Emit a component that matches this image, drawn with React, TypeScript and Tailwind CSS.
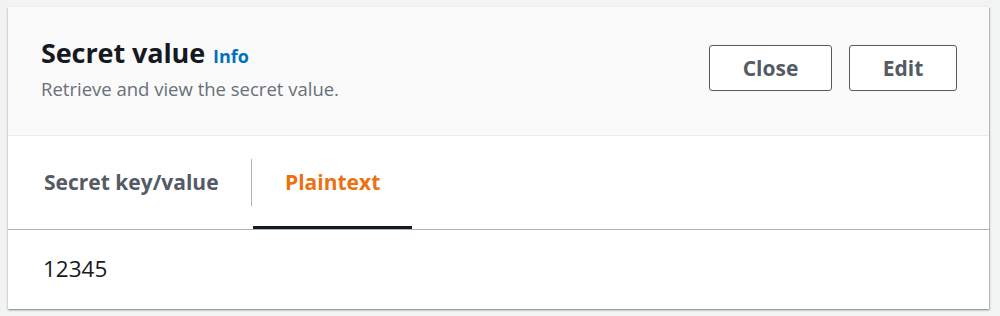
import React from "react";

export default function App() {
  return (
    <div className="w-[1000px] h-[316px] bg-[#f2f3f3] pt-[7px] pl-[8px] pr-[11px]" style={{ fontFamily: '"Open Sans", "Noto Sans", sans-serif' }}>
      <div className="bg-white shadow-[0_1px_2px_rgba(0,28,36,0.4),1px_1px_1px_rgba(0,28,36,0.15)] h-[302px] flex flex-col">
        <div className="h-[129px] shrink-0 bg-[#fafafa] border-b border-[#eaeded] flex items-start justify-between pl-[33px] pr-[32px]">
          <div className="pt-[30px]">
            <div className="flex items-baseline gap-[8px] h-[32px]">
              <span className="text-[27px] font-bold text-[#16191f] leading-[32px] tracking-[-0.1px]">Secret value</span>
              <span className="text-[18px] font-bold text-[#0073bb] leading-[32px]">Info</span>
            </div>
            <div className="text-[18.5px] text-[#687078] mt-[8px] leading-[24px]">Retrieve and view the secret value.</div>
          </div>
          <div className="flex gap-[17px] pt-[38px]">
            <button className="w-[123px] h-[46px] border border-[#545b64] rounded-[3px] bg-white text-[21px] font-bold text-[#545b64] leading-none">Close</button>
            <button className="w-[108px] h-[46px] border border-[#545b64] rounded-[3px] bg-white text-[21px] font-bold text-[#545b64] leading-none">Edit</button>
          </div>
        </div>
        <div className="h-[94px] shrink-0 border-b border-[#aab7b8] flex items-stretch pl-[36px]">
          <div className="w-[207px] flex items-center text-[21px] font-bold text-[#545b64]">Secret key/value</div>
          <div className="flex items-center"><div className="w-px h-[47px] bg-[#aab7b8]" /></div>
          <div className="relative w-[159px] ml-[1px] flex items-center pl-[32px] text-[21px] font-bold text-[#ec7211]">
            Plaintext
            <div className="absolute left-0 right-0 bottom-0 h-[3px] bg-[#16191f]" />
          </div>
        </div>
        <div className="pl-[35px] pt-[24px] text-[22.5px] text-[#16191f] leading-[30px]">12345</div>
      </div>
    </div>
  );
}
